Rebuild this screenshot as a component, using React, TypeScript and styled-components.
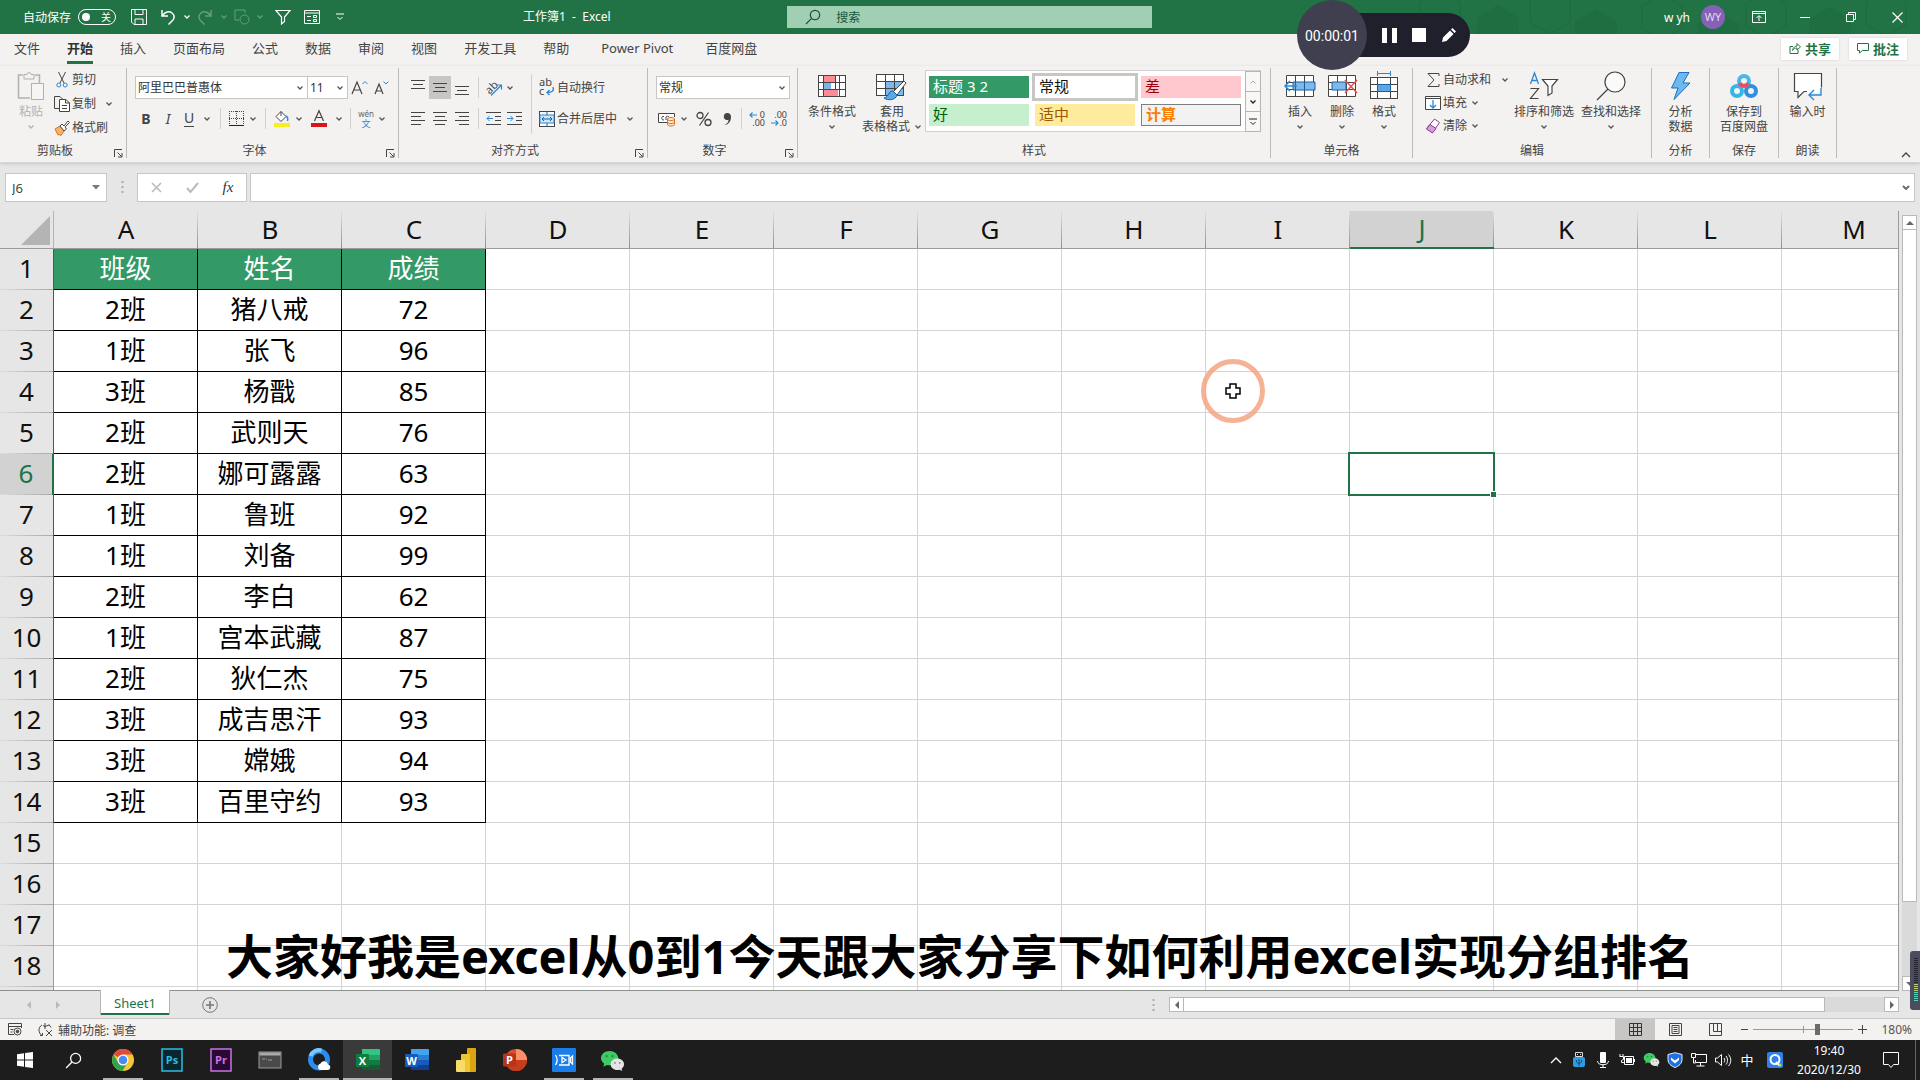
import React from "react";
import styled, { createGlobalStyle, css } from "styled-components";

const green = "#217346";
const ui = '"Noto Sans", "Noto Sans CJK SC", sans-serif';

const GlobalStyle = createGlobalStyle`
  *, *::before, *::after { box-sizing: border-box; }
  body { margin: 0; font-family: ${ui}; font-size: 12px; color: #444; overflow: hidden; }
  button, input, select { font: inherit; color: inherit; }
  svg { display: block; flex: none; overflow: visible; }
`;

const Page = styled.div`
  position: relative;
  display: flex;
  flex-direction: column;
  height: 100vh;
  background: #e6e6e6;
  overflow: hidden;
`;

const plainButton = css`
  display: flex;
  align-items: center;
  justify-content: center;
  margin: 0;
  padding: 0;
  border: 0;
  background: transparent;
  white-space: nowrap;
`;

/* ---------- title bar ---------- */

const TitleBar = styled.header`
  position: relative;
  display: grid;
  grid-template-columns: 41fr 19fr 40fr;
  align-items: center;
  flex: none;
  height: 34px;
  background: ${green};
  color: #fff;
`;

const TitlePattern = styled.svg`
  position: absolute;
  top: 0;
  right: 0;
  overflow: hidden;
`;

const TitleLeft = styled.div`
  display: flex;
  align-items: center;
  height: 32px;
  padding-left: 23px;
`;

const AutoSave = styled.label`
  display: flex;
  align-items: center;
  gap: 7px;
  width: 102px;
`;

const Toggle = styled.button`
  ${plainButton}
  justify-content: space-between;
  width: 38px;
  height: 16px;
  padding: 0 4px 0 3px;
  border: 1px solid #fff;
  border-radius: 8px;
  font-size: 10px;
  line-height: 14px;
`;

const Knob = styled.span`
  width: 8px;
  height: 8px;
  border-radius: 50%;
  background: #fff;
`;

const TitleTool = styled.button<{ $w: number; $dim?: boolean }>`
  ${plainButton}
  width: ${(p) => p.$w}px;
  height: 24px;
  opacity: ${(p) => (p.$dim ? 0.3 : 1)};
`;

const DocTitle = styled.h1`
  margin: -3px 0 0 166px;
  font-size: 12px;
  font-weight: 400;
  white-space: pre;
`;

const SearchBox = styled.label`
  display: flex;
  align-items: center;
  height: 22px;
  padding-left: 18px;
  gap: 15px;
  background: #a0cfb3;
  color: #17573a;
`;

const SearchInput = styled.input`
  flex: 1;
  min-width: 0;
  padding: 0;
  border: 0;
  outline: 0;
  background: transparent;
  &::placeholder { color: #17573a; opacity: 1; }
`;

const TitleRight = styled.div`
  position: relative;
  display: flex;
  align-items: center;
  justify-content: flex-end;
  height: 32px;
`;

const Avatar = styled.span`
  width: 24px;
  height: 24px;
  margin: 0 11px;
  border-radius: 50%;
  background: #8661b8;
  color: #e4d8f3;
  font-size: 11px;
  line-height: 24px;
  text-align: center;
`;

/* ---------- tabs ---------- */

const TabBar = styled.nav`
  display: flex;
  align-items: center;
  flex: none;
  height: 32px;
  padding: 0 13px 0 14px;
  gap: 27px;
  background: #f3f2f1;
`;

const Tab = styled.button<{ $active?: boolean; $latin?: boolean }>`
  ${plainButton}
  height: 28px;
  padding: 0 ${(p) => (p.$latin ? 5 : 0)}px 5px;
  font-size: 13px;
  line-height: 18px;
  font-weight: ${(p) => (p.$active ? 700 : 400)};
  color: ${(p) => (p.$active ? "#333" : "#444")};
  box-shadow: ${(p) => (p.$active ? `inset 0 -3px 0 ${green}` : "none")};
`;

const TabActions = styled.div`
  display: flex;
  gap: 10px;
  margin-left: auto;
  padding-bottom: 2px;
`;

const ActionButton = styled.button`
  ${plainButton}
  gap: 4px;
  width: 58px;
  height: 22px;
  padding-bottom: 2px;
  background: #fff;
  box-shadow: 0 0 2px #ccc;
  color: ${green};
  font-size: 13px;
  font-weight: 700;
`;

/* ---------- ribbon ---------- */

const Ribbon = styled.section`
  display: flex;
  flex: none;
  height: 97px;
  padding: 2px 0 4px;
  background: #f3f2f1;
  border-bottom: 1px solid #d8d6d4;
  box-shadow: 0 1px 3px #c9c7c5;
`;

const Group = styled.section<{ $w: number }>`
  display: flex;
  flex-direction: column;
  width: ${(p) => p.$w}px;
  border-right: 1px solid #bdbbb9;
`;

const GroupBody = styled.div<{ $pad?: number; $gap?: number; $center?: boolean }>`
  display: flex;
  flex: 1;
  min-height: 0;
  gap: ${(p) => p.$gap ?? 0}px;
  padding-left: ${(p) => p.$pad ?? 0}px;
  justify-content: ${(p) => (p.$center ? "center" : "flex-start")};
`;

const GroupFoot = styled.div`
  display: flex;
  align-items: center;
  height: 14px;
`;

const GroupName = styled.h2`
  flex: 1;
  margin: 0;
  font-size: 12px;
  line-height: 14px;
  font-weight: 400;
  text-align: center;
`;

const Launcher = styled.button`
  ${plainButton}
  width: 16px;
  height: 14px;
  padding-top: 4px;
`;

const Stack = styled.div<{ $top?: number; $gap?: number }>`
  display: flex;
  flex-direction: column;
  padding-top: ${(p) => p.$top ?? 0}px;
  gap: ${(p) => p.$gap ?? 0}px;
`;

const Row = styled.div`
  display: flex;
  align-items: center;
`;

const Line = styled.button<{ $h: number }>`
  ${plainButton}
  justify-content: flex-start;
  height: ${(p) => p.$h}px;
  line-height: 16px;
`;

const LineIcon = styled.span`
  display: flex;
  justify-content: center;
  width: 20px;
`;

const LineText = styled.span<{ $gap?: number }>`
  margin-right: ${(p) => p.$gap ?? 0}px;
`;

const Tool = styled.button<{ $w: number; $on?: boolean }>`
  ${plainButton}
  width: ${(p) => p.$w}px;
  height: 23px;
  background: ${(p) => (p.$on ? "#c8c6c4" : "transparent")};
`;

const Letter = styled.span<{ $kind: "b" | "i" | "u" }>`
  font-family: "Noto Sans", sans-serif;
  font-size: 14px;
  line-height: 16px;
  font-weight: ${(p) => (p.$kind === "b" ? 700 : 400)};
  font-style: ${(p) => (p.$kind === "i" ? "italic" : "normal")};
  border-bottom: ${(p) => (p.$kind === "u" ? "1px solid #444" : "0")};
`;

const Sep = styled.span<{ $h?: number }>`
  width: 1px;
  height: ${(p) => p.$h ?? 21}px;
  margin: 0 5px;
  background: #d2d0ce;
`;

const BigButton = styled.button<{ $w: number; $dim?: boolean }>`
  ${plainButton}
  flex-direction: column;
  justify-content: flex-start;
  width: ${(p) => p.$w}px;
  line-height: 15px;
  color: ${(p) => (p.$dim ? "#b3b1af" : "#444")};
`;

const BigIcon = styled.span`
  display: flex;
  align-items: center;
  justify-content: center;
  height: 36px;
`;

const BigLine = styled.span`
  display: flex;
  align-items: center;
  gap: 4px;
  height: 15px;
`;

const SelectWrap = styled.span<{ $w: number }>`
  display: flex;
  align-items: center;
  width: ${(p) => p.$w}px;
  height: 23px;
  padding-right: 3px;
  border: 1px solid #c8c6c4;
  background: #fff;
  & + & { border-left: 0; }
`;

const Select = styled.select`
  flex: 1;
  min-width: 0;
  height: 21px;
  padding: 0 0 0 2px;
  border: 0;
  outline: 0;
  appearance: none;
  background: transparent;
  color: #333;
`;

const Gallery = styled.div`
  display: flex;
  width: 336px;
  height: 62px;
  margin: 2px 0 0 3px;
  border: 1px solid #d2d0ce;
  background: #fff;
`;

const Swatches = styled.div`
  display: grid;
  grid-template-columns: repeat(3, 100px);
  grid-template-rows: 22px 22px;
  gap: 6px;
  flex: 1;
  padding: 5px 0 0 3px;
`;

const Swatch = styled.button<{ $bg: string; $fg: string; $sel?: boolean; $line?: boolean }>`
  ${plainButton}
  justify-content: flex-start;
  padding: 0 0 2px 4px;
  font-size: 15px;
  line-height: 20px;
  background: ${(p) => p.$bg};
  color: ${(p) => p.$fg};
  font-weight: ${(p) => (p.$line ? 700 : 400)};
  border: ${(p) => (p.$line ? "1px solid #7f7f7f" : "0")};
  outline: ${(p) => (p.$sel ? "3px solid #c8c6c4" : "0")};
`;

const GalleryScroll = styled.div`
  display: grid;
  grid-template-rows: 20px 20px 20px;
  width: 15px;
`;

const GalleryButton = styled.button`
  ${plainButton}
  border: 1px solid #b8b6b4;
  background: #f8f7f6;
  margin: 0 -1px -1px 0;
`;

const RibbonEnd = styled.div`
  display: flex;
  flex: 1;
  align-items: flex-end;
  justify-content: flex-end;
  padding-right: 8px;
`;

const CollapseButton = styled.button`
  ${plainButton}
  width: 12px;
  height: 8px;
`;

/* ---------- formula bar ---------- */

const FormulaBar = styled.div`
  display: flex;
  align-items: flex-start;
  flex: none;
  height: 48px;
  padding: 10px 5px 0;
`;

const NameBox = styled.label`
  display: flex;
  align-items: center;
  width: 102px;
  height: 29px;
  padding: 0 6px;
  border: 1px solid #c6c6c6;
  background: #fff;
`;

const BareInput = styled.input`
  flex: 1;
  min-width: 0;
  padding: 0;
  border: 0;
  outline: 0;
  background: transparent;
  font-size: 13px;
`;

const BarGrip = styled.span`
  display: flex;
  justify-content: center;
  width: 30px;
  padding-top: 8px;
`;

const FxBox = styled.div`
  display: flex;
  align-items: center;
  width: 110px;
  height: 29px;
  margin-right: 3px;
  border: 1px solid #c6c6c6;
  background: #fff;
`;

const FxButton = styled.button`
  ${plainButton}
  flex: 1;
  height: 27px;
  font-family: "Liberation Serif", serif;
  font-size: 15px;
  font-style: italic;
  color: #333;
`;

const FormulaInput = styled.label`
  display: flex;
  align-items: center;
  flex: 1;
  height: 29px;
  padding: 0 4px;
  border: 1px solid #c6c6c6;
  background: #fff;
`;

/* ---------- sheet ---------- */

const SheetArea = styled.main`
  display: flex;
  flex: 1;
  min-height: 0;
`;

const GridClip = styled.div`
  flex: 1;
  min-width: 0;
  overflow: hidden;
  border-right: 1px solid #9b9b9b;
  border-bottom: 1px solid #8c918e;
`;

const Grid = styled.table`
  width: 1926px;
  table-layout: fixed;
  border-collapse: separate;
  border-spacing: 0;
  font-size: 26px;
  line-height: 34px;
  color: #111;
`;

const CornerHead = styled.th`
  width: 54px;
  height: 38px;
  padding: 0 3px 3px 0;
  background: #e6e6e6;
  border-right: 1px solid #b5b5b5;
  border-bottom: 1px solid #9b9b9b;
  vertical-align: bottom;
`;

const CornerMark = styled.svg`
  margin-left: auto;
`;

const ColHead = styled.th<{ $on: boolean }>`
  width: 144px;
  height: 38px;
  padding: 0 0 2px;
  font-weight: 400;
  color: ${(p) => (p.$on ? green : "#111")};
  border-bottom: ${(p) => (p.$on ? `2px solid ${green}` : "1px solid #9b9b9b")};
  background: linear-gradient(#e0e0e0, #8f8f8f) right / 1px 100% no-repeat ${(p) => (p.$on ? "#d2d2d2" : "#e6e6e6")};
`;

const RowHead = styled.th<{ $on: boolean; $data: boolean }>`
  height: 41px;
  padding: 0 0 4px;
  font-weight: 400;
  color: ${(p) => (p.$on ? green : "#111")};
  border-right: ${(p) => (p.$on ? `2px solid ${green}` : `1px solid ${p.$data ? "#555" : "#9b9b9b"}`)};
  background: linear-gradient(to right, #dcdcdc, #a8a8a8) bottom / 100% 1px no-repeat ${(p) => (p.$on ? "#d2d2d2" : "#e6e6e6")};
`;

const Cell = styled.td<{ $kind: "empty" | "data" | "head" }>`
  position: relative;
  height: 41px;
  padding: 0 0 2px;
  text-align: center;
  white-space: nowrap;
  border-right: 1px solid ${(p) => (p.$kind === "empty" ? "#d4d4d4" : "#000")};
  border-bottom: 1px solid ${(p) => (p.$kind === "empty" ? "#d4d4d4" : "#000")};
  background: ${(p) => (p.$kind === "head" ? "#339966" : "#fff")};
  color: ${(p) => (p.$kind === "head" ? "#fff" : "#000")};
`;

const ActiveFrame = styled.span`
  position: absolute;
  inset: -2px;
  z-index: 1;
  border: 2px solid ${green};
  &::after {
    content: "";
    position: absolute;
    right: -4px;
    bottom: -4px;
    width: 7px;
    height: 7px;
    border: 1px solid #fff;
    background: ${green};
  }
`;

const VScroll = styled.div`
  display: flex;
  flex-direction: column;
  width: 15px;
  margin: 4px 3px 0;
  background: #dadada;
`;

const ScrollButton = styled.button`
  ${plainButton}
  flex: none;
  width: 15px;
  height: 15px;
  border: 1px solid #b9b9b9;
  background: #fff;
`;

const VThumb = styled.div`
  flex: 0 0 672px;
  border: 1px solid #b9b9b9;
  border-top: 0;
  background: #fff;
`;

const Filler = styled.span`
  flex: 1;
`;

/* ---------- sheet tabs ---------- */

const SheetBar = styled.div`
  display: flex;
  align-items: center;
  flex: none;
  height: 28px;
  padding: 0 21px;
  border-bottom: 1px solid #c8c8c8;
`;

const NavButton = styled.button`
  ${plainButton}
  width: 16px;
  height: 20px;
  margin-right: 13px;
`;

const SheetTab = styled.button`
  ${plainButton}
  align-self: flex-start;
  width: 70px;
  height: 25px;
  margin: -1px 32px 0 21px;
  background: #fff;
  border: 1px solid #b5b5b5;
  border-width: 0 1px;
  box-shadow: inset 0 -2px 0 ${green};
  font-size: 13px;
  color: ${green};
`;

const AddButton = styled.button`
  ${plainButton}
  width: 16px;
  height: 16px;
`;

const HScroll = styled.div`
  display: flex;
  flex: 0 0 730px;
  margin-left: 14px;
  background: #dadada;
`;

const HThumb = styled.div`
  flex: 0 0 641px;
  border: 1px solid #b9b9b9;
  border-left: 0;
  background: #fff;
`;

/* ---------- status bar ---------- */

const StatusBar = styled.footer`
  display: flex;
  align-items: center;
  flex: none;
  height: 21px;
  padding: 0 8px;
  background: #f3f2f1;
`;

const StatusIcon = styled.span`
  display: flex;
  width: 30px;
`;

const StatusText = styled.span`
  margin: 0 auto 0 4px;
`;

const ViewButton = styled.button<{ $on?: boolean }>`
  ${plainButton}
  width: 40px;
  height: 21px;
  background: ${(p) => (p.$on ? "#c8c6c4" : "transparent")};
`;

const ZoomButton = styled.button`
  ${plainButton}
  width: 18px;
  height: 20px;
`;

const ZoomSlider = styled.input`
  width: 100px;
  height: 20px;
  margin: 0;
  appearance: none;
  background: linear-gradient(#999, #999) center / 100% 1px no-repeat, linear-gradient(#999, #999) center / 1px 7px no-repeat;
  &::-webkit-slider-thumb {
    appearance: none;
    width: 5px;
    height: 11px;
    background: #6b6b6b;
  }
`;

const ZoomValue = styled.button`
  ${plainButton}
  justify-content: flex-end;
  width: 41px;
  font-size: 12px;
  color: #555;
`;

/* ---------- taskbar ---------- */

const Taskbar = styled.footer`
  display: flex;
  align-items: stretch;
  flex: none;
  height: 40px;
  background: #1d1d1d;
  color: #fff;
`;

const AppButton = styled.button<{ $run?: boolean; $on?: boolean }>`
  ${plainButton}
  width: 49px;
  ${(p) =>
    (p.$run || p.$on) &&
    css`
      background-image: linear-gradient(#b8b3b8, #b8b3b8)${p.$on ? ", linear-gradient(#3a3a3a, #3a3a3a)" : ""};
      background-size: ${p.$on ? "100% 2px, 100% 100%" : "40px 2px"};
      background-position: bottom;
      background-repeat: no-repeat;
    `}
`;

const Tray = styled.div`
  display: flex;
  margin-left: auto;
`;

const TrayButton = styled.button<{ $w?: number }>`
  ${plainButton}
  width: ${(p) => p.$w ?? 24}px;
  padding-bottom: 1px;
  font-size: 13px;
`;

const Clock = styled.time`
  display: flex;
  flex-direction: column;
  justify-content: center;
  width: 76px;
  line-height: 19px;
  text-align: center;
  padding-bottom: 1px;
`;

const DesktopEdge = styled.span`
  width: 5px;
  border-left: 1px solid #666;
`;

/* ---------- overlays ---------- */

const Caption = styled.p`
  position: absolute;
  left: 0;
  right: 0;
  bottom: 91px;
  margin: 0;
  font-size: 47px;
  line-height: 66px;
  font-weight: 700;
  text-align: center;
  color: #000;
  white-space: nowrap;
  pointer-events: none;
`;

const Pointer = styled.svg`
  position: absolute;
  left: 1201px;
  top: 359px;
  pointer-events: none;
`;

const Recorder = styled.div`
  position: absolute;
  top: 0;
  right: 450px;
  display: flex;
  align-items: center;
  height: 70px;
`;

const RecordTime = styled.span`
  position: relative;
  width: 70px;
  height: 70px;
  border-radius: 50%;
  background: #3f3f4f;
  color: #fff;
  font-family: Roboto, sans-serif;
  font-size: 14px;
  line-height: 72px;
  text-align: center;
`;

const RecordTools = styled.div`
  display: flex;
  align-items: center;
  justify-content: flex-end;
  width: 138px;
  height: 44px;
  margin-left: -35px;
  padding-right: 6px;
  border-radius: 0 22px 22px 0;
  background: #20202c;
`;

const RecordButton = styled.button`
  ${plainButton}
  width: 30px;
  height: 30px;
`;

const Meter = styled.svg`
  position: absolute;
  right: 0;
  bottom: 70px;
`;

/* ---------- drawings ---------- */

type IconProps = { w?: number; h?: number; box?: string; children: React.ReactNode };

const Icon = ({ w = 16, h = 16, box, children }: IconProps) => (
  <svg width={w} height={h} viewBox={box ?? `0 0 ${w} ${h}`} fill="none" stroke="#444" aria-hidden="true">
    {children}
  </svg>
);

const Chevron = ({ color = "#555" }: { color?: string }) => (
  <Icon w={8} h={6}>
    <path d="M1.5 1.5L4 4l2.500-2.500" stroke={color} strokeWidth="1.300" />
  </Icon>
);

const Drop = ({ w = 12 }: { w?: number }) => (
  <Tool $w={w} aria-label="更多">
    <Chevron />
  </Tool>
);

const Tri = ({ dir, color = "#666" }: { dir: "up" | "down" | "left" | "right"; color?: string }) => {
  const d = { up: "M1 7l4-4 4 4z", down: "M1 3l4 4 4-4z", left: "M7 1L3 5l4 4z", right: "M3 1l4 4-4 4z" }[dir];
  return (
    <Icon w={10} h={10}>
      <path d={d} fill={color} stroke="none" />
    </Icon>
  );
};

const Bars = ({ rows, h = 14 }: { rows: [number, number, number][]; h?: number }) => (
  <Icon w={16} h={h}>
    {rows.map(([x, y, len]) => (
      <path key={y} d={`M${x} ${y}.500h${len}`} />
    ))}
  </Icon>
);

const Dots = () => (
  <Icon w={3} h={12}>
    <path d="M1.500 0v12" stroke="#aaa" strokeWidth="2" strokeDasharray="2 3" />
  </Icon>
);

const LaunchIcon = () => (
  <Icon w={9} h={9}>
    <path d="M.5 8V.5H8M3.500 3.500l4 4M8 4v4H4" />
  </Icon>
);

const SearchGlass = ({ color = "#17573a", size = 16 }: { color?: string; size?: number }) => (
  <Icon w={size} h={size} box="0 0 16 16">
    <circle cx="10" cy="6" r="4.700" stroke={color} strokeWidth="1.200" />
    <path d="M6.600 9.400L1 15" stroke={color} strokeWidth="1.200" />
  </Icon>
);

const WeChat = ({ size }: { size: number }) => (
  <Icon w={size} h={size} box="0 0 26 26">
    <g stroke="none">
      <path d="M10 3c5 0 9 3.300 9 7.500S15 18 10 18c-1 0-2-.1-2.900-.4L3.500 19.500l.8-3.300C2.300 14.900 1 12.800 1 10.500 1 6.300 5 3 10 3z" fill="#3ecb63" />
      <path d="M18 11c4 0 7 2.700 7 6 0 1.900-1 3.500-2.500 4.600l.6 2.400-2.700-1.300c-.8.200-1.600.3-2.400.3-4 0-7-2.700-7-6s3-6 7-6z" fill="#e4e4e4" />
      <g fill="#238c40">
        <circle cx="7" cy="8.500" r="1.200" />
        <circle cx="13" cy="8.500" r="1.200" />
      </g>
      <g fill="#888">
        <circle cx="15.500" cy="15.500" r="1" />
        <circle cx="20.500" cy="15.500" r="1" />
      </g>
    </g>
  </Icon>
);

const OfficeTile = ({ letter, tones, plate }: { letter: string; tones: string[]; plate: string }) => (
  <Icon w={26} h={24}>
    <g stroke="none">
      <path d="M7 1h17a1 1 0 011 1v5H7z" fill={tones[0]} />
      <path d="M7 7h18v5H7z" fill={tones[1]} />
      <path d="M7 12h18v5H7z" fill={tones[2]} />
      <path d="M7 17h18v4a1 1 0 01-1 1H8a1 1 0 01-1-1z" fill={tones[3]} />
      <rect x="1" y="6" width="13" height="13" rx="1" fill={plate} />
      <text x="7.500" y="16.500" fill="#fff" fontSize="11" fontWeight="700" textAnchor="middle" fontFamily="Open Sans, sans-serif">
        {letter}
      </text>
    </g>
  </Icon>
);

const AdobeTile = ({ text, line, fill }: { text: string; line: string; fill: string }) => (
  <Icon w={22} h={24}>
    <rect x="1" y="1" width="20" height="22" fill={fill} stroke={line} strokeWidth="1.500" />
    <text x="11" y="16" fill={line} stroke="none" fontSize="11" fontWeight="700" textAnchor="middle" fontFamily="Open Sans, sans-serif">
      {text}
    </text>
  </Icon>
);

const tabs = ["文件", "开始", "插入", "页面布局", "公式", "数据", "审阅", "视图", "开发工具", "帮助", "Power Pivot", "百度网盘"];
const columns = "ABCDEFGHIJKLM".split("");
const rows = Array.from({ length: 19 }, (_, i) => i + 1);
const records = [
  ["班级", "姓名", "成绩"],
  ["2班", "猪八戒", "72"],
  ["1班", "张飞", "96"],
  ["3班", "杨戬", "85"],
  ["2班", "武则天", "76"],
  ["2班", "娜可露露", "63"],
  ["1班", "鲁班", "92"],
  ["1班", "刘备", "99"],
  ["2班", "李白", "62"],
  ["1班", "宫本武藏", "87"],
  ["2班", "狄仁杰", "75"],
  ["3班", "成吉思汗", "93"],
  ["3班", "嫦娥", "94"],
  ["3班", "百里守约", "93"],
];

const hexes = [[40, 2], [98, 18], [150, 0], [196, 22], [262, 6], [318, 24], [366, 4], [430, 20], [486, 2]];

function Title() {
  return (
    <TitleBar>
      <TitlePattern width="540" height="34" viewBox="0 0 540 34" aria-hidden="true">
        {hexes.map(([x, y], i) => (
          <path
            key={x}
            d={`M${x} ${y}l20-12 20 12v22l-20 12-20-12z`}
            fill={i % 2 ? "#1f6e42" : "none"}
            stroke="#1f6e42"
            strokeWidth="2"
          />
        ))}
      </TitlePattern>
      <TitleLeft>
        <AutoSave>
          自动保存
          <Toggle role="switch" aria-checked="false">
            <Knob />关
          </Toggle>
        </AutoSave>
        <TitleTool $w={28} aria-label="保存">
          <Icon>
            <path d="M.5.5h15v15H3L.5 13zM4 .5v5h8v-5M4 15.500V10h8v5.500" stroke="#fff" />
          </Icon>
        </TitleTool>
        <TitleTool $w={30} aria-label="撤消">
          <Icon>
            <path d="M2 1v6h6M2.500 6.500C5 3 9 1.500 12 4s2.500 5.500.5 7.500L8.500 15.500" stroke="#fff" strokeWidth="1.500" />
          </Icon>
        </TitleTool>
        <TitleTool $w={8} aria-label="撤消列表"><Chevron color="#fff" /></TitleTool>
        <TitleTool $w={28} $dim aria-label="恢复">
          <Icon>
            <path d="M14 1v6H8M13.500 6.500C11 3 7 1.500 4 4s-2.500 5.500-.5 7.500l4 4" stroke="#fff" strokeWidth="1.500" />
          </Icon>
        </TitleTool>
        <TitleTool $w={10} $dim aria-label="恢复列表"><Chevron color="#fff" /></TitleTool>
        <TitleTool $w={26} $dim aria-label="形状">
          <Icon>
            <path d="M5 11H1V1h10v3" stroke="#fff" />
            <circle cx="10.500" cy="10.500" r="4.500" stroke="#fff" />
          </Icon>
        </TitleTool>
        <TitleTool $w={10} $dim aria-label="形状列表"><Chevron color="#fff" /></TitleTool>
        <TitleTool $w={36} aria-label="筛选">
          <Icon>
            <path d="M1 1.500h14L9.500 8v4.500L6.500 15V8z" stroke="#fff" strokeWidth="1.200" />
          </Icon>
        </TitleTool>
        <TitleTool $w={22} aria-label="窗体">
          <Icon>
            <path d="M.5 1.500h15v13H.5zM.5 4h15M3 7.500h4M3 11.500h4M9.500 6.500h3v2h-3zM9.500 10.500h3v2h-3z" stroke="#fff" />
          </Icon>
        </TitleTool>
        <TitleTool $w={34} aria-label="自定义快速访问工具栏">
          <Icon w={8} h={8}>
            <path d="M0 1h8M1.500 4L4 6.500 6.500 4" stroke="#fff" />
          </Icon>
        </TitleTool>
        <DocTitle>工作簿1  -  Excel</DocTitle>
      </TitleLeft>
      <SearchBox>
        <SearchGlass />
        <SearchInput aria-label="搜索" placeholder="搜索" />
      </SearchBox>
      <TitleRight>
        w yh
        <Avatar>WY</Avatar>
        <TitleTool $w={46} aria-label="功能区显示选项">
          <Icon w={14} h={12}>
            <path d="M.5.5h13v11H.5zM.5 2.500h13M7 10V5M4.500 7L7 4.500 9.500 7" stroke="#fff" />
          </Icon>
        </TitleTool>
        <TitleTool $w={46} aria-label="最小化">
          <Icon w={10} h={10}><path d="M0 5.500h10" stroke="#fff" /></Icon>
        </TitleTool>
        <TitleTool $w={46} aria-label="还原">
          <Icon w={10} h={10}><path d="M.5 2.500h7v7h-7zM2.500 2V.5h7v7H8" stroke="#fff" /></Icon>
        </TitleTool>
        <TitleTool $w={46} aria-label="关闭">
          <Icon w={11} h={11}><path d="M.5.5l10 10M10.500.5l-10 10" stroke="#fff" strokeWidth="1.200" /></Icon>
        </TitleTool>
      </TitleRight>
    </TitleBar>
  );
}

function Tabs() {
  return (
    <TabBar>
      {tabs.map((t) => (
        <Tab key={t} $active={t === "开始"} $latin={/^[A-Z]/.test(t)}>{t}</Tab>
      ))}
      <TabActions>
        <ActionButton>
          <Icon w={12} h={12}>
            <path d="M4 4.500H1v7h8V8M3.500 8.500C4 5.500 6 4 8 4V1.500L11.500 5 8 8V6C6 6 4.500 7 3.500 8.500z" stroke={green} />
          </Icon>
          共享
        </ActionButton>
        <ActionButton>
          <Icon w={12} h={12}>
            <path d="M.5 1.500h11v7h-6l-3 2.500v-2.500h-2z" stroke={green} />
          </Icon>
          批注
        </ActionButton>
      </TabActions>
    </TabBar>
  );
}

type RibbonGroupProps = {
  w: number;
  name: string;
  launch?: boolean;
  pad?: number;
  gap?: number;
  center?: boolean;
  children: React.ReactNode;
};

const RibbonGroup = ({ w, name, launch, pad, gap, center, children }: RibbonGroupProps) => (
  <Group $w={w}>
    <GroupBody $pad={pad} $gap={gap} $center={center}>{children}</GroupBody>
    <GroupFoot>
      <GroupName>{name}</GroupName>
      {launch && <Launcher aria-label={`${name}设置`}><LaunchIcon /></Launcher>}
    </GroupFoot>
  </Group>
);

type BigProps = { w: number; icon: React.ReactNode; lines: string[]; drop?: "below" | "inline"; dim?: boolean };

const Big = ({ w, icon, lines, drop, dim }: BigProps) => (
  <BigButton $w={w} $dim={dim}>
    <BigIcon>{icon}</BigIcon>
    {lines.map((l, i) => (
      <BigLine key={l}>
        {l}
        {drop === "inline" && i === lines.length - 1 && <Chevron />}
      </BigLine>
    ))}
    {drop === "below" && <BigLine><Chevron color={dim ? "#b3b1af" : undefined} /></BigLine>}
  </BigButton>
);

const blue = "#2b88d8";

const GridSheet = ({ children }: { children?: React.ReactNode }) => (
  <Icon w={32} h={28}>
    <rect x="2" y="3" width="28" height="22" fill="#fff" stroke="none" />
    <path d="M2.500 3.500h27v21h-27zM2.500 10.500h27M2.500 17.500h27M11.500 3.500v21M20.500 3.500v21" />
    {children}
  </Icon>
);

function RibbonBar() {
  return (
    <Ribbon>
      <RibbonGroup w={127} name="剪贴板" launch pad={10}>
        <Big
          w={42}
          dim
          lines={["粘贴"]}
          drop="below"
          icon={
            <Icon w={28} h={30}>
              <path d="M6 4H1.500v23H13M18 4h4.500v8" stroke="#b3b1af" strokeWidth="1.500" />
              <path d="M7 3.500h3a2 2 0 014 0h3V8H7z" fill="#f3f2f1" stroke="#b3b1af" />
              <rect x="14.500" y="12.500" width="12" height="16" fill="#f6f5f4" stroke="#b3b1af" />
            </Icon>
          }
        />
        <Stack>
          <Line $h={24}>
            <LineIcon>
              <Icon w={12}>
                <path d="M2.500 0l5.500 11M9.500 0L4 11" />
                <circle cx="2.800" cy="13" r="2" stroke={blue} />
                <circle cx="9.200" cy="13" r="2" stroke={blue} />
              </Icon>
            </LineIcon>
            剪切
          </Line>
          <Line $h={24}>
            <LineIcon>
              <Icon w={16}>
                <path d="M5 12.500H.5v-12H6l3 3" />
                <path d="M5.500 3.500H12l3.500 3.500v8.500h-10zM11.500 3.500V7h4M8 9.500h5M8 12.500h5" fill="#fff" />
              </Icon>
            </LineIcon>
            <LineText $gap={9}>复制</LineText>
            <Chevron />
          </Line>
          <Line $h={24}>
            <LineIcon>
              <Icon w={16}>
                <path d="M1 9l5-3 4 5-3 4.500-2-1-1 .5z" fill="#f7b267" stroke="#d9741a" />
                <path d="M6 6l2-2 2 2 4-5 1.500 1.500L11 7l1.500 2L10 11z" fill="#fff" />
              </Icon>
            </LineIcon>
            格式刷
          </Line>
        </Stack>
      </RibbonGroup>

      <RibbonGroup w={272} name="字体" launch pad={8}>
        <Stack $top={8} $gap={8}>
          <Row>
            <SelectWrap $w={173}>
              <Select aria-label="字体"><option>阿里巴巴普惠体</option></Select>
              <Chevron />
            </SelectWrap>
            <SelectWrap $w={40}>
              <Select aria-label="字号"><option>11</option></Select>
              <Chevron />
            </SelectWrap>
            <Tool $w={22} aria-label="增大字号">
              <Icon w={17}>
                <path d="M1 14L6 2l5 12M3 10h6" strokeWidth="1.200" />
                <path d="M11.500 4L14 1.500 16.500 4" stroke={blue} />
              </Icon>
            </Tool>
            <Tool $w={22} aria-label="减小字号">
              <Icon w={15}>
                <path d="M1 14L5 4l4 10M2.500 11h5" strokeWidth="1.200" />
                <path d="M9.500 1.500L12 4l2.500-2.500" stroke={blue} />
              </Icon>
            </Tool>
          </Row>
          <Row>
            <Tool $w={22} aria-label="加粗"><Letter $kind="b">B</Letter></Tool>
            <Tool $w={22} aria-label="倾斜"><Letter $kind="i">I</Letter></Tool>
            <Tool $w={20} aria-label="下划线"><Letter $kind="u">U</Letter></Tool>
            <Drop w={16} />
            <Sep />
            <Tool $w={20} aria-label="边框">
              <Icon w={15} h={15}>
                <path d="M.5 0v14M14.500 0v14M7.500 0v14M0 .5h15M0 7.500h15" strokeDasharray="1 1" />
                <path d="M0 14.500h15" stroke="#222" />
              </Icon>
            </Tool>
            <Drop w={14} />
            <Sep />
            <Tool $w={22} aria-label="填充颜色">
              <Icon w={16} h={17}>
                <path d="M7 1.500l5 5-5 5-5-5zM7 1.500V6" fill="#fff" />
                <path d="M12 6c2 1 2 3 1.500 5" stroke={blue} strokeWidth="1.500" />
                <path d="M0 13h16v4H0z" fill="#f7ee1c" stroke="none" />
              </Icon>
            </Tool>
            <Drop />
            <Tool $w={28} aria-label="字体颜色">
              <Icon w={16} h={17}>
                <path d="M3.500 11L8 .8 12.500 11M5 7.500h6" strokeWidth="1.200" />
                <path d="M0 13h16v4H0z" fill="#d8151a" stroke="none" />
              </Icon>
            </Tool>
            <Drop />
            <Sep />
            <Tool $w={20} aria-label="拼音">
              <Icon w={18} h={18}>
                <text x="9" y="7" fill="#666" stroke="none" fontSize="8" textAnchor="middle" fontFamily="Noto Sans, Noto Sans CJK SC, sans-serif">
                  wén
                  <tspan x="9" y="17" fill={blue} fontSize="9">文</tspan>
                </text>
              </Icon>
            </Tool>
            <Drop />
          </Row>
        </Stack>
      </RibbonGroup>

      <RibbonGroup w={249} name="对齐方式" launch pad={8}>
        <Stack $top={8} $gap={8}>
          <Row>
            <Tool $w={22} aria-label="顶端对齐"><Bars rows={[[1, 0, 14], [3, 4, 10], [1, 8, 14]]} h={16} /></Tool>
            <Tool $w={22} $on aria-label="垂直居中"><Bars rows={[[1, 3, 14], [3, 7, 10], [1, 11, 14]]} h={16} /></Tool>
            <Tool $w={22} aria-label="底端对齐"><Bars rows={[[1, 6, 14], [3, 10, 10], [1, 14, 14]]} h={16} /></Tool>
            <Sep />
            <Tool $w={20} aria-label="方向">
              <Icon w={17}>
                <text x="0" y="12" fill="#444" stroke="none" fontSize="11" transform="rotate(-45 5 9)" fontFamily="Noto Sans, sans-serif">ab</text>
                <path d="M5 15.500L15.500 5M11 5h4.500v4.500" stroke={blue} strokeWidth="1.200" />
              </Icon>
            </Tool>
            <Drop />
          </Row>
          <Row>
            <Tool $w={22} aria-label="左对齐"><Bars rows={[[1, 0, 14], [1, 4, 10], [1, 8, 14], [1, 12, 10]]} /></Tool>
            <Tool $w={22} aria-label="居中"><Bars rows={[[1, 0, 14], [3, 4, 10], [1, 8, 14], [3, 12, 10]]} /></Tool>
            <Tool $w={22} aria-label="右对齐"><Bars rows={[[1, 0, 14], [5, 4, 10], [1, 8, 14], [5, 12, 10]]} /></Tool>
            <Sep />
            <Tool $w={18} aria-label="减少缩进量">
              <Icon w={15} h={14}>
                <path d="M0 .5h15M9 4.500h6M9 8.500h6M0 12.500h15" />
                <path d="M7 6.500H1M3.500 4L1 6.500 3.500 9" stroke={blue} />
              </Icon>
            </Tool>
            <Tool $w={24} aria-label="增加缩进量">
              <Icon w={15} h={14}>
                <path d="M0 .5h15M9 4.500h6M9 8.500h6M0 12.500h15" />
                <path d="M0 6.500h6M3.500 4L6 6.500 3.500 9" stroke={blue} />
              </Icon>
            </Tool>
          </Row>
        </Stack>
        <Stack $top={6}>
          <Sep $h={60} />
        </Stack>
        <Stack $top={8} $gap={8}>
          <Line $h={23}>
            <LineIcon>
              <Icon w={18} h={17}>
                <text x="1" y="7" fill="#444" stroke="none" fontSize="11" fontFamily="Noto Sans, sans-serif">
                  ab
                  <tspan x="1" y="16">c</tspan>
                </text>
                <path d="M15 8c1.500 4-1 5.500-6 5.500M11.500 11L9 13.500l2.500 2.500" stroke={blue} strokeWidth="1.300" />
              </Icon>
            </LineIcon>
            自动换行
          </Line>
          <Line $h={23}>
            <LineIcon>
              <Icon w={16} h={16}>
                <rect x=".5" y=".5" width="15" height="15" fill="#fff" />
                <rect x="1" y="4" width="14" height="8" fill="#cfe6f8" stroke={blue} />
                <path d="M8 0v4M8 12v4M3 8h10M5 6L3 8l2 2M11 6l2 2-2 2" stroke="#1e5f99" />
              </Icon>
            </LineIcon>
            <LineText $gap={9}>合并后居中</LineText>
            <Chevron />
          </Line>
        </Stack>
      </RibbonGroup>

      <RibbonGroup w={150} name="数字" launch pad={8}>
        <Stack $top={8} $gap={8}>
          <Row>
            <SelectWrap $w={134}>
              <Select aria-label="数字格式"><option>常规</option></Select>
              <Chevron />
            </SelectWrap>
          </Row>
          <Row>
            <Tool $w={22} aria-label="会计数字格式">
              <Icon w={18} h={16}>
                <path d="M9 11.500H.5v-9h16V6" fill="#fff" />
                <path d="M6 5.500c-3-1-3 4 0 3.500M8 9V6c0-1 3-1 3 0" />
                <path d="M9.500 8c0-2 7-2 7 0v5.500c0 2-7 2-7 0zM9.500 8c0 2 7 2 7 0M9.500 11c0 2 7 2 7 0" fill="#fbe3cb" stroke="#d9741a" />
              </Icon>
            </Tool>
            <Drop />
            <Tool $w={28} aria-label="百分比样式">
              <Icon w={16} h={16}>
                <circle cx="4" cy="4.500" r="3" strokeWidth="1.300" />
                <circle cx="12" cy="11.500" r="3" strokeWidth="1.300" />
                <path d="M12.500 1.500l-9 13" strokeWidth="1.200" />
              </Icon>
            </Tool>
            <Tool $w={18} aria-label="千位分隔样式">
              <Icon w={9} h={14}>
                <path d="M4.500 1a3.500 3.500 0 00-1 6.900c.8.200 1.500 0 2-.2C5.500 10 4 12 1.500 13c4.500-.5 6.500-4 6.500-8.300C8 2.500 6.500 1 4.500 1z" fill="#444" stroke="none" />
              </Icon>
            </Tool>
            <Sep />
            <Tool $w={20} aria-label="增加小数位数">
              <Icon w={16} h={16}>
                <text x="16" y="7" fill="#444" stroke="none" fontSize="9" textAnchor="end" fontFamily="Noto Sans, sans-serif">
                  0
                  <tspan x="16" y="15">.00</tspan>
                </text>
                <path d="M8 4H1M3.500 1.500L1 4l2.500 2.500" stroke={blue} strokeWidth="1.200" />
              </Icon>
            </Tool>
            <Tool $w={24} aria-label="减少小数位数">
              <Icon w={16} h={16}>
                <text x="16" y="7" fill="#444" stroke="none" fontSize="9" textAnchor="end" fontFamily="Noto Sans, sans-serif">
                  .00
                  <tspan x="16" y="15">.0</tspan>
                </text>
                <path d="M0 12h7M4.500 9.500L7 12l-2.500 2.500" stroke={blue} strokeWidth="1.200" />
              </Icon>
            </Tool>
          </Row>
        </Stack>
      </RibbonGroup>

      <RibbonGroup w={473} name="样式" pad={4}>
        <Big
          w={60}
          lines={["条件格式"]}
          drop="below"
          icon={
            <Icon w={28} h={28}>
              <rect x=".5" y="3.500" width="27" height="21" fill="#fff" />
              <rect x="5" y="4" width="12" height="7" fill="#ff8a94" stroke="none" />
              <rect x="5" y="11" width="8" height="6" fill="#7db4e6" stroke="none" />
              <rect x="5" y="17" width="15" height="7" fill="#ff8a94" stroke="none" />
              <path d="M.5 3.500h27v21H.5zM.5 10.500h27M.5 17.500h27M5.500 3.500v21M17.500 3.500v14M21.500 3.500v21" />
            </Icon>
          }
        />
        <Big
          w={60}
          lines={["套用", "表格格式"]}
          drop="inline"
          icon={
            <Icon w={32} h={30}>
              <rect x=".5" y="3.500" width="27" height="21" fill="#fff" />
              <rect x="10" y="11" width="17" height="13" fill="#7db9ee" stroke="none" />
              <path d="M.5 3.500h27v21H.5zM.5 10.500h27M.5 17.500h27M9.500 3.500v21M18.500 3.500v21" />
              <path d="M28 10l2 2-9 12-4-3z" fill="#fff" />
              <path d="M17 20c-5 0-4 6-9 7 4 3 12 2 13-3z" fill="#5aa9e6" stroke="#1e5f99" />
            </Icon>
          }
        />
        <Stack $gap={0}>
          <Gallery>
            <Swatches>
              <Swatch $bg="#339966" $fg="#fff">标题 3 2</Swatch>
              <Swatch $bg="#fff" $fg="#111" $sel>常规</Swatch>
              <Swatch $bg="#ffc7ce" $fg="#9c0006">差</Swatch>
              <Swatch $bg="#c6efce" $fg="#006100">好</Swatch>
              <Swatch $bg="#ffeb9c" $fg="#9c5700">适中</Swatch>
              <Swatch $bg="#f2f2f2" $fg="#fa7d00" $line>计算</Swatch>
            </Swatches>
            <GalleryScroll>
              <GalleryButton aria-label="上一行">
                <Icon w={8} h={6}><path d="M1.500 4.500L4 2l2.500 2.500" stroke="#aaa" /></Icon>
              </GalleryButton>
              <GalleryButton aria-label="下一行"><Chevron color="#222" /></GalleryButton>
              <GalleryButton aria-label="其他样式">
                <Icon w={8} h={8}><path d="M0 1h8M1.500 4L4 6.500 6.500 4" stroke="#222" /></Icon>
              </GalleryButton>
            </GalleryScroll>
          </Gallery>
        </Stack>
      </RibbonGroup>

      <RibbonGroup w={142} name="单元格" pad={8}>
        <Big w={42} lines={["插入"]} drop="below" icon={
          <GridSheet>
            <path d="M9 10h22v8H9z" fill="#7db9ee" stroke="#1e5f99" />
            <path d="M11.500 10v8M20.500 10v8" stroke="#1e5f99" />
            <path d="M13 14H1M6 9l-5 5 5 5" stroke={blue} strokeWidth="1.500" />
          </GridSheet>
        } />
        <Big w={42} lines={["删除"]} drop="below" icon={
          <GridSheet>
            <path d="M6 10h14v8H6z" fill="#7db9ee" stroke="#1e5f99" />
            <path d="M19 8l12 13M31 8L19 21" stroke="#e8504a" strokeWidth="1.500" />
          </GridSheet>
        } />
        <Big w={42} lines={["格式"]} drop="below" icon={
          <Icon w={32} h={32}>
            <rect x="2.500" y="7.500" width="27" height="21" fill="#fff" />
            <path d="M2.500 14.500h27M2.500 21.500h27M9.500 7.500v21M22.500 7.500v21" />
            <rect x="9.500" y="14.500" width="13" height="7" fill="#5aa9e6" stroke="#1e5f99" />
            <path d="M9 3.500h14M9.500 1v5M22.500 1v5" stroke={blue} />
          </Icon>
        } />
      </RibbonGroup>

      <RibbonGroup w={239} name="编辑" pad={10}>
        <Stack>
          <Line $h={23}>
            <LineIcon>
              <Icon w={13} h={14}><path d="M12 3V.5H1L7 7l-6 6.500h11V11" /></Icon>
            </LineIcon>
            <LineText $gap={10}>自动求和</LineText>
            <Chevron />
          </Line>
          <Line $h={23}>
            <LineIcon>
              <Icon w={16} h={14}>
                <path d="M.5.5h15v13H.5zM.5 2.500h15" fill="#fff" />
                <path d="M8 4v8M5 9l3 3 3-3" stroke={blue} strokeWidth="1.300" />
              </Icon>
            </LineIcon>
            <LineText $gap={4}>填充</LineText>
            <Chevron />
          </Line>
          <Line $h={23}>
            <LineIcon>
              <Icon w={16} h={16}>
                <path d="M9.500 1l5 3.500-7 10-6-4z" fill="#fff" stroke="#8e3a9d" />
                <path d="M5 6.500l6 4-3.500 4.500-6-4z" fill="#d59fdc" stroke="#8e3a9d" />
              </Icon>
            </LineIcon>
            <LineText $gap={4}>清除</LineText>
            <Chevron />
          </Line>
        </Stack>
        <Big w={70} lines={["排序和筛选"]} drop="below" icon={
          <Icon w={30} h={30}>
            <path d="M1.500 13L5.500 2l4 11M3 9.500h5" stroke={blue} strokeWidth="1.300" />
            <path d="M1.500 17.500h8l-8 10h8" strokeWidth="1.200" />
            <path d="M13.500 8.500h15L23 15v7l-4 2.500V15z" fill="#fff" strokeWidth="1.200" />
          </Icon>
        } />
        <Big w={64} lines={["查找和选择"]} drop="below" icon={
          <Icon w={32} h={32}>
            <circle cx="20" cy="12" r="10" fill="#fafafa" strokeWidth="1.200" />
            <path d="M13 19L2 30" strokeWidth="1.300" />
          </Icon>
        } />
      </RibbonGroup>

      <RibbonGroup w={58} name="分析" center>
        <Big w={56} lines={["分析", "数据"]} icon={
          <Icon w={24} h={30}>
            <path d="M10 1.500h10L14 12h7L5 28.500 9 17H2.500z" fill="#6cb8f0" stroke="#1e6fb8" />
          </Icon>
        } />
      </RibbonGroup>
      <RibbonGroup w={69} name="保存" center>
        <Big w={68} lines={["保存到", "百度网盘"]} icon={
          <Icon w={28} h={26}>
            <circle cx="7" cy="18" r="5" stroke="#35b5e8" strokeWidth="4" />
            <circle cx="21" cy="18" r="5" stroke="#2f8fe0" strokeWidth="4" />
            <circle cx="14" cy="8" r="5" stroke="#45b9ea" strokeWidth="4" />
            <path d="M9.500 10a5 5 0 009 0" stroke="#e8505f" strokeWidth="4" />
          </Icon>
        } />
      </RibbonGroup>
      <RibbonGroup w={58} name="朗读" center>
        <Big w={57} lines={["输入时"]} icon={
          <Icon w={30} h={30}>
            <path d="M1.500 2.500h27v19H12l-7 6v-6H1.500z" fill="#fff" stroke="none" />
            <path d="M14 20.500h-3l-6 6v-6H1.500v-18h27v14" strokeWidth="1.200" />
            <path d="M28 17v7H16M21 19l-5 5 5 5" stroke={blue} strokeWidth="1.400" />
          </Icon>
        } />
      </RibbonGroup>
      <RibbonEnd>
        <CollapseButton aria-label="折叠功能区">
          <Icon w={10} h={7}><path d="M1 6l4-4 4 4" strokeWidth="1.400" /></Icon>
        </CollapseButton>
      </RibbonEnd>
    </Ribbon>
  );
}

function Formula() {
  return (
    <FormulaBar>
      <NameBox>
        <BareInput aria-label="名称框" defaultValue="J6" />
        <Icon w={8} h={5}><path d="M0 0h8L4 4.500z" fill="#777" stroke="none" /></Icon>
      </NameBox>
      <BarGrip><Dots /></BarGrip>
      <FxBox>
        <FxButton aria-label="取消">
          <Icon w={11} h={11}><path d="M1 1l9 9M10 1l-9 9" stroke="#bbb" strokeWidth="1.600" /></Icon>
        </FxButton>
        <FxButton aria-label="输入">
          <Icon w={13} h={11}><path d="M1 6l3.500 4L12 1" stroke="#bbb" strokeWidth="2" /></Icon>
        </FxButton>
        <FxButton>fx</FxButton>
      </FxBox>
      <FormulaInput>
        <BareInput aria-label="编辑栏" />
        <Icon w={8} h={6}><path d="M1 1l3 3 3-3" stroke="#666" strokeWidth="1.800" /></Icon>
      </FormulaInput>
    </FormulaBar>
  );
}

function Sheet() {
  return (
    <SheetArea>
      <GridClip>
        <Grid>
          <thead>
            <tr>
              <CornerHead aria-label="全选">
                <CornerMark width="29" height="29" viewBox="0 0 29 29">
                  <path d="M29 0v29H0z" fill="#b4b4b4" />
                </CornerMark>
              </CornerHead>
              {columns.map((c) => (
                <ColHead key={c} scope="col" $on={c === "J"}>{c}</ColHead>
              ))}
            </tr>
          </thead>
          <tbody>
            {rows.map((r) => (
              <tr key={r}>
                <RowHead scope="row" $on={r === 6} $data={r <= records.length}>{r < 19 ? r : ""}</RowHead>
                {columns.map((c, i) => {
                  const text = records[r - 1]?.[i];
                  return (
                    <Cell key={c} $kind={text === undefined ? "empty" : r === 1 ? "head" : "data"}>
                      {text}
                      {c === "J" && r === 6 && <ActiveFrame />}
                    </Cell>
                  );
                })}
              </tr>
            ))}
          </tbody>
        </Grid>
      </GridClip>
      <VScroll>
        <ScrollButton aria-label="向上滚动"><Tri dir="up" /></ScrollButton>
        <VThumb />
        <Filler />
        <ScrollButton aria-label="向下滚动"><Tri dir="down" /></ScrollButton>
      </VScroll>
    </SheetArea>
  );
}

function SheetTabs() {
  return (
    <SheetBar>
      <NavButton aria-label="上一张工作表"><Tri dir="left" color="#bbb" /></NavButton>
      <NavButton aria-label="下一张工作表"><Tri dir="right" color="#bbb" /></NavButton>
      <SheetTab>Sheet1</SheetTab>
      <AddButton aria-label="新工作表">
        <Icon>
          <circle cx="8" cy="8" r="7.300" stroke="#777" />
          <path d="M8 4v8M4 8h8" stroke="#777" strokeWidth="1.600" />
        </Icon>
      </AddButton>
      <Filler />
      <Dots />
      <HScroll>
        <ScrollButton aria-label="向左滚动"><Tri dir="left" /></ScrollButton>
        <HThumb />
        <Filler />
        <ScrollButton aria-label="向右滚动"><Tri dir="right" /></ScrollButton>
      </HScroll>
    </SheetBar>
  );
}

function Status() {
  return (
    <StatusBar>
      <StatusIcon>
        <Icon w={14} h={13}>
          <path d="M6 11.500H.5V.5h13V5M.5 3.500h13M2.500 6.500h3M2.500 9h2" />
          <circle cx="9.500" cy="8.500" r="3.500" />
          <circle cx="9.500" cy="8.500" r="1.300" fill="#444" />
        </Icon>
      </StatusIcon>
      <Icon w={16} h={16}>
        <path d="M4 3C0 5 0 11 4 13.500M2 13.500h2.500V11M7 1v6M5 3.500l2 1 4-1.500M8 8l6 6M14 8l-6 6M11 2.500l2 3" />
      </Icon>
      <StatusText>辅助功能: 调查</StatusText>
      <ViewButton $on aria-label="普通">
        <Icon w={13} h={13}><path d="M.5.500h12v12H.5zM.5 4.500h12M.5 8.500h12M4.500.500v12M8.500.500v12" stroke="#333" /></Icon>
      </ViewButton>
      <ViewButton aria-label="页面布局">
        <Icon w={13} h={13}><path d="M.5.500h12v12H.5zM3 2.500h7v8H3zM4.500 4.500h4M4.500 6.500h4M4.500 8.500h4" /></Icon>
      </ViewButton>
      <ViewButton aria-label="分页预览">
        <Icon w={13} h={13}><path d="M.5.500h12v12H.5zM4.500.500v8h8M8.500.500v8" /></Icon>
      </ViewButton>
      <ZoomButton aria-label="缩小"><Icon w={9} h={9}><path d="M1 4.500h7" /></Icon></ZoomButton>
      <ZoomSlider type="range" min="10" max="270" defaultValue="180" aria-label="显示比例" />
      <ZoomButton aria-label="放大"><Icon w={9} h={9}><path d="M0 4.500h9M4.500 0v9" /></Icon></ZoomButton>
      <ZoomValue>180%</ZoomValue>
    </StatusBar>
  );
}

function SystemBar() {
  return (
    <Taskbar>
      <AppButton aria-label="开始菜单">
        <Icon w={16}>
          <path d="M0 2.300L7 1.300v6.300H0zM8 1.100L16 0v7.600H8zM0 8.500h7v6.300l-7-1zM8 8.500h8V16l-8-1.100z" fill="#fff" stroke="none" />
        </Icon>
      </AppButton>
      <AppButton aria-label="搜索"><SearchGlass color="#fff" size={17} /></AppButton>
      <AppButton $run aria-label="Chrome">
        <Icon w={22} h={22}>
          <g stroke="none">
            <circle cx="11" cy="11" r="11" fill="#f6c634" />
            <path d="M11 11L1.500 5.500A11 11 0 0120.500 5.500H11z" fill="#dd4b3e" />
            <path d="M1.500 5.500A11 11 0 0010.500 22l5-8.500L11 11 6.500 14z" fill="#2fa24f" />
            <circle cx="11" cy="11" r="5.500" fill="#fff" />
            <circle cx="11" cy="11" r="4.300" fill="#4a8af4" />
          </g>
        </Icon>
      </AppButton>
      <AppButton aria-label="Photoshop"><AdobeTile text="Ps" line="#26c0dc" fill="#0b2530" /></AppButton>
      <AppButton aria-label="Premiere"><AdobeTile text="Pr" line="#c873e6" fill="#2a0a35" /></AppButton>
      <AppButton aria-label="命令提示符">
        <Icon w={24} h={20}>
          <rect x="1" y="2" width="22" height="16" fill="#4a4a4a" stroke="#9a9a9a" />
          <rect x="1.500" y="2.500" width="21" height="3" fill="#aaa" stroke="none" />
          <path d="M4 9h3M8 9h1M10 10h4" stroke="#999" />
        </Icon>
      </AppButton>
      <AppButton $run aria-label="QQ浏览器">
        <Icon w={24} h={24}>
          <circle cx="12" cy="11.500" r="8.500" stroke="#2a8cec" strokeWidth="5" />
          <path d="M3.500 8a9 9 0 0111-5.500" stroke="#7cc7ff" strokeWidth="4" />
          <path d="M13 22a3.500 3.500 0 01.5-6.500 4 4 0 017.500 1c3 .5 3 5 0 5.500z" fill="#fff" stroke="none" />
        </Icon>
      </AppButton>
      <AppButton $on aria-label="Excel"><OfficeTile letter="X" tones={["#33c481", "#21a366", "#107c41", "#185c37"]} plate="#107c41" /></AppButton>
      <AppButton aria-label="Word"><OfficeTile letter="W" tones={["#41a5ee", "#2b7cd3", "#185abd", "#103f91"]} plate="#185abd" /></AppButton>
      <AppButton aria-label="Power BI">
        <Icon w={20} h={24}>
          <g stroke="none">
            <rect x="11" y="0" width="9" height="24" rx="1" fill="#dba512" />
            <rect x="5" y="6" width="9" height="18" rx="1" fill="#f0c530" />
            <rect x="0" y="12" width="9" height="12" rx="1" fill="#f7dc65" />
          </g>
        </Icon>
      </AppButton>
      <AppButton aria-label="PowerPoint">
        <Icon w={26} h={24}>
          <g stroke="none">
            <circle cx="14" cy="12" r="11" fill="#d35230" />
            <path d="M14 1a11 11 0 0111 11H14z" fill="#ff8f6b" />
            <path d="M3 12h22a11 11 0 01-22 0z" fill="#c43e1c" />
            <rect x="1" y="5.500" width="13" height="13" rx="1" fill="#b7341a" />
            <text x="7.500" y="16" fill="#fff" fontSize="11" fontWeight="700" textAnchor="middle" fontFamily="Open Sans, sans-serif">P</text>
          </g>
        </Icon>
      </AppButton>
      <AppButton $run aria-label="录屏">
        <Icon w={24} h={24}>
          <rect width="24" height="24" rx="1" fill="#1a7de8" stroke="none" />
          <path d="M7 7.500h10v9.500H7M3.500 7c2 3 2 7 0 10M10 9.500v5l4-2.500zM20.500 8v8l-2-2v-4z" stroke="#fff" strokeWidth="1.300" />
        </Icon>
      </AppButton>
      <AppButton $run aria-label="微信"><WeChat size={25} /></AppButton>
      <Tray>
        <TrayButton $w={22} aria-label="显示隐藏的图标">
          <Icon w={12} h={8}><path d="M1 7l5-5 5 5" stroke="#fff" strokeWidth="1.300" /></Icon>
        </TrayButton>
        <TrayButton aria-label="USB">
          <Icon w={12} h={16}>
            <path d="M2.500.500h7v4h-7zM4 2.500h1M7 2.500h1" stroke="#ddd" />
            <rect x="0" y="5" width="12" height="10" rx="2" fill="#2f9be0" stroke="none" />
            <path d="M6 7v7M3.500 8v2L6 12l2.500-2V8" stroke="#0d4f80" />
          </Icon>
        </TrayButton>
        <TrayButton aria-label="麦克风">
          <Icon w={12} h={16}>
            <rect x="3" y="0" width="6" height="11" rx="1" fill="#fff" stroke="none" />
            <path d="M.5 9c0 5 11 5 11 0M6 12.500V15M3 15.500h6" stroke="#fff" />
          </Icon>
        </TrayButton>
        <TrayButton aria-label="电池">
          <Icon w={16} h={12}>
            <path d="M5.500 2.500h9v8h-9zM15.500 5v3" stroke="#fff" />
            <rect x="7" y="4" width="6" height="5" fill="#fff" stroke="none" />
            <path d="M1 0v2M4 0v2M.5 2.500h4v3l-2 1v2h3" stroke="#fff" />
          </Icon>
        </TrayButton>
        <TrayButton aria-label="微信通知"><WeChat size={17} /></TrayButton>
        <TrayButton aria-label="安全防护">
          <Icon w={16} h={16}>
            <path d="M8 .7l7 1.800v5C15 11.500 12 14 8 15.500 4 14 1 11.500 1 7.500v-5z" fill="#1f6fe0" stroke="#e8f0ff" />
            <path d="M4 5.500l4 3 4-3v2.500L8 11.500 4 8z" fill="#fff" stroke="none" />
          </Icon>
        </TrayButton>
        <TrayButton aria-label="网络">
          <Icon w={16} h={14}>
            <path d="M5 1.500h10.500v8h-11V7M9.500 10v3M5.500 13h8M.5.500h4v4h-4zM2.500 5v5h2" stroke="#fff" />
          </Icon>
        </TrayButton>
        <TrayButton aria-label="音量">
          <Icon w={17} h={14}>
            <path d="M.5 5v4h2L6.500 12.500v-11L2.500 5zM9 5c1 1.500 1 3 0 4.500M11 3c2 2.500 2 6 0 8.500M13.500 1.500c3 3.500 3 8 0 11.500" stroke="#fff" />
          </Icon>
        </TrayButton>
        <TrayButton>中</TrayButton>
        <TrayButton $w={32} aria-label="输入法">
          <Icon w={16} h={16}>
            <rect width="16" height="16" rx="2" fill="#2f80ea" stroke="none" />
            <circle cx="8" cy="7.500" r="4.500" stroke="#fff" strokeWidth="2" />
            <path d="M9 10l3.500 3.500" stroke="#fff" strokeWidth="2" />
            <circle cx="13" cy="13" r="1.500" fill="#b5e35a" stroke="none" />
          </Icon>
        </TrayButton>
        <Clock dateTime="2020-12-30T19:40">
          <span>19:40</span>
          <span>2020/12/30</span>
        </Clock>
        <TrayButton $w={48} aria-label="通知">
          <Icon w={16} h={16}><path d="M.5.500h15v12h-5L8 15.500l-2.500-3H.5z" stroke="#fff" /></Icon>
        </TrayButton>
        <DesktopEdge />
      </Tray>
    </Taskbar>
  );
}

const meterSteps = Array.from({ length: 22 }, (_, i) => i);

export default function App() {
  return (
    <Page>
      <GlobalStyle />
      <Title />
      <Tabs />
      <RibbonBar />
      <Formula />
      <Sheet />
      <SheetTabs />
      <Status />
      <SystemBar />

      <Caption>大家好我是excel从0到1今天跟大家分享下如何利用excel实现分组排名</Caption>

      <Pointer width="64" height="64" viewBox="0 0 64 64" aria-hidden="true">
        <circle cx="32" cy="32" r="29.500" fill="none" stroke="#f4a582" strokeOpacity=".85" strokeWidth="5" />
        <path d="M29 25h6v4h4v6h-4v4h-6v-4h-4v-6h4z" fill="#fff" stroke="#000" strokeWidth="1.500" />
      </Pointer>

      <Recorder>
        <RecordTime>00:00:01</RecordTime>
        <RecordTools>
          <RecordButton aria-label="暂停">
            <Icon w={15} h={15}><path d="M0 0h5v15H0zM10 0h5v15h-5z" fill="#fff" stroke="none" /></Icon>
          </RecordButton>
          <RecordButton aria-label="停止">
            <Icon w={14} h={14}><path d="M0 0h14v14H0z" fill="#fff" stroke="none" /></Icon>
          </RecordButton>
          <RecordButton aria-label="画笔">
            <Icon w={14} h={14}><path d="M0 14l1-4.500L8 2.500 11.500 6l-7 7zM9 1.500L10.500 0 14 3.500 12.500 5z" fill="#fff" stroke="none" /></Icon>
          </RecordButton>
        </RecordTools>
      </Recorder>

      <Meter width="10" height="59" viewBox="0 0 10 59" aria-hidden="true">
        <path d="M10 0H3a3 3 0 00-3 3v53a3 3 0 003 3h7z" fill="#4b4c5f" />
        {meterSteps.map((i) => (
          <rect key={i} x="4" y={7 + i * 2} width="4" height="1" fill={i < 13 ? "#24242e" : i < 17 ? "#b8cf7a" : "#4fd6b4"} />
        ))}
      </Meter>
    </Page>
  );
}
